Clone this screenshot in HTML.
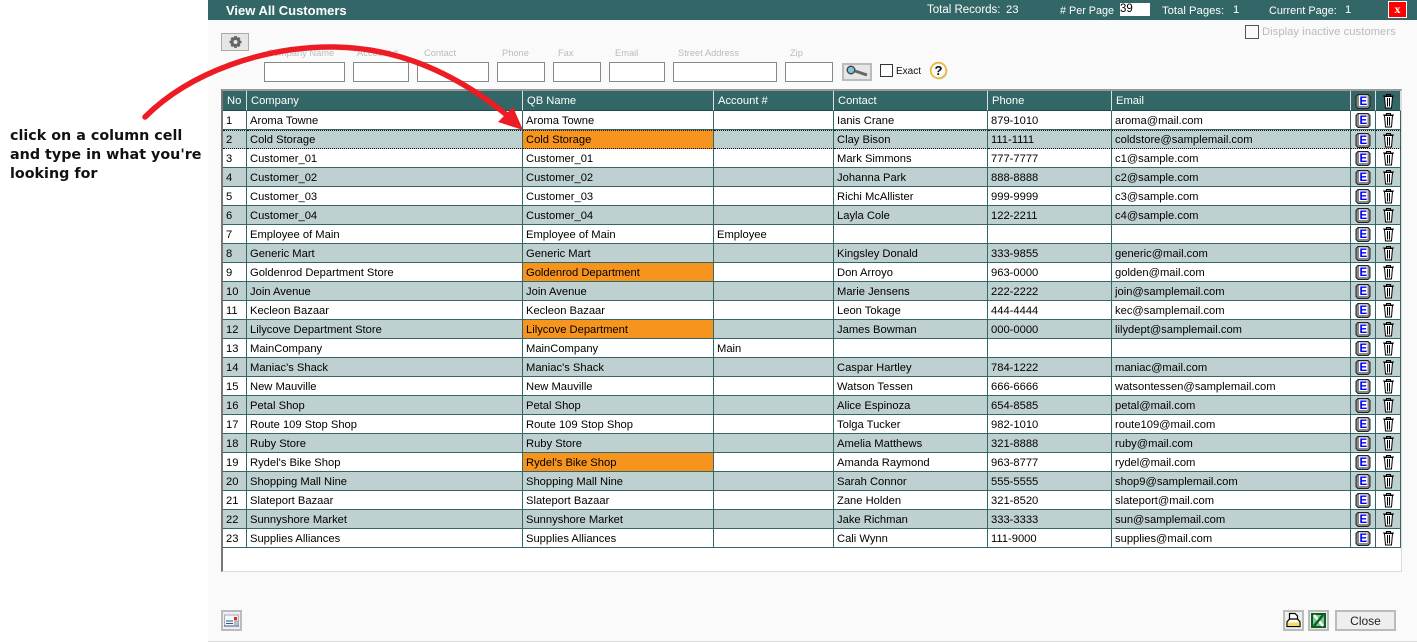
<!DOCTYPE html>
<html><head><meta charset="utf-8"><style>
html,body{margin:0;padding:0;width:1417px;height:643px;overflow:hidden;background:#fff;font-family:"Liberation Sans",sans-serif}
.a{position:absolute;white-space:nowrap}
.l{position:absolute;top:47px;font-size:9.3px;line-height:12px;color:#bbb;white-space:nowrap}
.i{position:absolute;top:62px;height:18px;border:1px solid #888;background:#fff;box-sizing:content-box}
.h{position:absolute;top:3px;font-size:11.3px;line-height:14px;color:#fff;white-space:nowrap}
.b{position:absolute;box-sizing:border-box;border:2px solid #bbb;background:#eee}
table{position:absolute;left:223px;top:91px;border-collapse:separate;border-spacing:0;table-layout:fixed;width:1178px}
td,th{box-sizing:border-box;height:19px;padding:2px 0 0 3px;font-size:11.2px;font-weight:normal;line-height:16px;text-align:left;white-space:nowrap;overflow:hidden;border-right:1px solid #336666;border-bottom:1px solid #336666;color:#000;vertical-align:middle}
th{background:#336666;color:#fff;height:20px;padding-left:4px;line-height:17px;border-right:1px solid #ddd;border-bottom:1px solid #1f4a4a}
tr.e td{background:#bfd0d0}
td.o{background:#f7941d!important}
td.c,th.c{padding:0;text-align:center}
td svg,th svg{display:block;margin:0 auto}
tr.s td{border-top:1px dotted #111;border-bottom:1px dotted #111;line-height:16px;padding-top:0}
</style></head><body>
<div class="a" style="left:208px;top:0;width:1209px;height:641px;background:#fafafa;border-bottom:1px solid #ddd"></div>
<div class="a" style="left:208px;top:0;width:1209px;height:20px;background:#336666"></div>
<div class="a" style="left:226px;top:3px;font-size:13px;font-weight:bold;line-height:15px;color:#fff">View All Customers</div>
<div class="h" style="left:927px;font-size:11.5px">Total Records:</div><div class="h" style="left:1006px">23</div>
<div class="h" style="left:1060px;top:4px;font-size:10.800px"># Per Page</div>
<div class="a" style="left:1120px;top:3px;width:30px;height:13px;background:#fff;font-size:11.500px;line-height:13px;color:#000">39</div>
<div class="h" style="left:1162px;top:4px">Total Pages:</div><div class="h" style="left:1233px">1</div>
<div class="h" style="left:1269px;top:4px;font-size:10.900px">Current Page:</div><div class="h" style="left:1345px">1</div>
<div class="a" style="left:1388px;top:1px;width:19px;height:17px;box-sizing:border-box;background:#f00;border:1px solid #fff;color:#fff;font:bold 12px/14px 'Liberation Serif',serif;text-align:center">x</div>

<div class="b" style="left:221px;top:33px;width:28px;height:18px;background:#e6e6e6;border-width:1px;border-color:#aaa"><svg width="26" height="16" viewBox="0 0 26 16" style="display:block"><circle cx="13.500" cy="8" r="3.500" fill="none" stroke="#666" stroke-width="3"/><path d="M13.500 2v2.500M13.500 11.500V14M7.500 8H10M17 8h2.500M9.300 3.800l1.700 1.700M16 10.500l1.700 1.700M17.700 3.800L16 5.500M11 10.500l-1.700 1.700" stroke="#666" stroke-width="2.600"/></svg></div>
<div class="a" style="left:1245px;top:25px;width:12px;height:12px;border:1px solid #555;background:#fafafa"></div>
<div class="a" style="left:1262px;top:25px;font-size:11.300px;line-height:14px;color:#bbb">Display inactive customers</div>

<div class="l" style="left:267px">Company Name</div><div class="l" style="left:357px">Account #</div><div class="l" style="left:424px">Contact</div><div class="l" style="left:502px">Phone</div><div class="l" style="left:558px">Fax</div><div class="l" style="left:615px">Email</div><div class="l" style="left:678px">Street Address</div><div class="l" style="left:790px">Zip</div>
<div class="i" style="left:264px;width:79px"></div><div class="i" style="left:353px;width:54px"></div><div class="i" style="left:417px;width:70px"></div><div class="i" style="left:497px;width:46px"></div><div class="i" style="left:553px;width:46px"></div><div class="i" style="left:609px;width:54px"></div><div class="i" style="left:673px;width:102px"></div><div class="i" style="left:785px;width:46px"></div>

<div class="b" style="left:842px;top:63px;width:30px;height:18px;background:#e6e6e6"><svg width="26" height="14" viewBox="0 0 26 14" style="display:block"><circle cx="7" cy="5" r="3.800" fill="#7fc4d6" stroke="#444" stroke-width="1.400"/><path d="M11 6l12 4" stroke="#666" stroke-width="3"/></svg></div>
<div class="a" style="left:880px;top:64px;width:11px;height:11px;border:1px solid #333;background:#fff"></div>
<div class="a" style="left:896px;top:66px;font-size:10px;line-height:12px;color:#111">Exact</div>
<svg class="a" style="left:929px;top:61px" width="20" height="20" viewBox="0 0 20 20"><circle cx="10.500" cy="10.500" r="8" fill="#ddd8d0"/><circle cx="9.500" cy="9.500" r="7.800" fill="#fafafa" stroke="#e6bc3c" stroke-width="1.800"/><text x="9.500" y="14" font-family="Liberation Sans" font-size="13" font-weight="bold" text-anchor="middle" fill="#111">?</text></svg>

<div class="a" style="left:221px;top:89px;width:1181px;height:483px;box-sizing:border-box;background:#fff;border-top:2px solid #999;border-left:2px solid #777;border-right:1px solid #ddd;border-bottom:1px solid #ddd"></div>

<table>
<colgroup><col style="width:24px"><col style="width:276px"><col style="width:191px"><col style="width:120px"><col style="width:154px"><col style="width:124px"><col style="width:239px"><col style="width:25px"><col style="width:25px"></colgroup>
<tr><th>No</th><th>Company</th><th>QB Name</th><th>Account #</th><th>Contact</th><th>Phone</th><th>Email</th>
<th class="c"><svg width="16" height="16" viewBox="0 0 16 16"><path d="M3 1.500h10l2 2v10l-2 2H3l-2-2v-10z" fill="#888" stroke="#222"/><rect x="4" y="2.500" width="8.500" height="10.500" fill="#fff"/><text x="8.300" y="12" font-family="Liberation Sans" font-size="11.500" font-weight="bold" text-anchor="middle" fill="#00f">E</text></svg></th>
<th class="c"><svg width="14" height="16" viewBox="0 0 14 16"><path d="M3.500 3.500l1 11.500h6l1-11.500z" fill="#fff" stroke="#000"/><path d="M2 3h11M5.500 2.500V1.500h4v1M6.500 5v8.500M8.500 5v8.500" fill="none" stroke="#000"/></svg></th></tr>
<tr><td>1</td><td>Aroma Towne</td><td>Aroma Towne</td><td></td><td>Ianis Crane</td><td>879-1010</td><td>aroma@mail.com</td><td class="c"><svg width="16" height="16" viewBox="0 0 16 16"><path d="M3 1.500h10l2 2v10l-2 2H3l-2-2v-10z" fill="#888" stroke="#222"/><rect x="4" y="2.500" width="8.500" height="10.500" fill="#fff"/><text x="8.300" y="12" font-family="Liberation Sans" font-size="11.500" font-weight="bold" text-anchor="middle" fill="#00f">E</text></svg></td><td class="c"><svg width="14" height="16" viewBox="0 0 14 16"><path d="M3.500 3.500l1 11.500h6l1-11.500z" fill="#fff" stroke="#000"/><path d="M2 3h11M5.500 2.500V1.500h4v1M6.500 5v8.500M8.500 5v8.500" fill="none" stroke="#000"/></svg></td></tr>
<tr class="e s"><td>2</td><td>Cold Storage</td><td class="o">Cold Storage</td><td></td><td>Clay Bison</td><td>111-1111</td><td>coldstore@samplemail.com</td><td class="c"><svg width="16" height="16" viewBox="0 0 16 16"><path d="M3 1.500h10l2 2v10l-2 2H3l-2-2v-10z" fill="#888" stroke="#222"/><rect x="4" y="2.500" width="8.500" height="10.500" fill="#fff"/><text x="8.300" y="12" font-family="Liberation Sans" font-size="11.500" font-weight="bold" text-anchor="middle" fill="#00f">E</text></svg></td><td class="c"><svg width="14" height="16" viewBox="0 0 14 16"><path d="M3.500 3.500l1 11.500h6l1-11.500z" fill="#fff" stroke="#000"/><path d="M2 3h11M5.500 2.500V1.500h4v1M6.500 5v8.500M8.500 5v8.500" fill="none" stroke="#000"/></svg></td></tr>
<tr><td>3</td><td>Customer_01</td><td>Customer_01</td><td></td><td>Mark Simmons</td><td>777-7777</td><td>c1@sample.com</td><td class="c"><svg width="16" height="16" viewBox="0 0 16 16"><path d="M3 1.500h10l2 2v10l-2 2H3l-2-2v-10z" fill="#888" stroke="#222"/><rect x="4" y="2.500" width="8.500" height="10.500" fill="#fff"/><text x="8.300" y="12" font-family="Liberation Sans" font-size="11.500" font-weight="bold" text-anchor="middle" fill="#00f">E</text></svg></td><td class="c"><svg width="14" height="16" viewBox="0 0 14 16"><path d="M3.500 3.500l1 11.500h6l1-11.500z" fill="#fff" stroke="#000"/><path d="M2 3h11M5.500 2.500V1.500h4v1M6.500 5v8.500M8.500 5v8.500" fill="none" stroke="#000"/></svg></td></tr>
<tr class="e"><td>4</td><td>Customer_02</td><td>Customer_02</td><td></td><td>Johanna Park</td><td>888-8888</td><td>c2@sample.com</td><td class="c"><svg width="16" height="16" viewBox="0 0 16 16"><path d="M3 1.500h10l2 2v10l-2 2H3l-2-2v-10z" fill="#888" stroke="#222"/><rect x="4" y="2.500" width="8.500" height="10.500" fill="#fff"/><text x="8.300" y="12" font-family="Liberation Sans" font-size="11.500" font-weight="bold" text-anchor="middle" fill="#00f">E</text></svg></td><td class="c"><svg width="14" height="16" viewBox="0 0 14 16"><path d="M3.500 3.500l1 11.500h6l1-11.500z" fill="#fff" stroke="#000"/><path d="M2 3h11M5.500 2.500V1.500h4v1M6.500 5v8.500M8.500 5v8.500" fill="none" stroke="#000"/></svg></td></tr>
<tr><td>5</td><td>Customer_03</td><td>Customer_03</td><td></td><td>Richi McAllister</td><td>999-9999</td><td>c3@sample.com</td><td class="c"><svg width="16" height="16" viewBox="0 0 16 16"><path d="M3 1.500h10l2 2v10l-2 2H3l-2-2v-10z" fill="#888" stroke="#222"/><rect x="4" y="2.500" width="8.500" height="10.500" fill="#fff"/><text x="8.300" y="12" font-family="Liberation Sans" font-size="11.500" font-weight="bold" text-anchor="middle" fill="#00f">E</text></svg></td><td class="c"><svg width="14" height="16" viewBox="0 0 14 16"><path d="M3.500 3.500l1 11.500h6l1-11.500z" fill="#fff" stroke="#000"/><path d="M2 3h11M5.500 2.500V1.500h4v1M6.500 5v8.500M8.500 5v8.500" fill="none" stroke="#000"/></svg></td></tr>
<tr class="e"><td>6</td><td>Customer_04</td><td>Customer_04</td><td></td><td>Layla Cole</td><td>122-2211</td><td>c4@sample.com</td><td class="c"><svg width="16" height="16" viewBox="0 0 16 16"><path d="M3 1.500h10l2 2v10l-2 2H3l-2-2v-10z" fill="#888" stroke="#222"/><rect x="4" y="2.500" width="8.500" height="10.500" fill="#fff"/><text x="8.300" y="12" font-family="Liberation Sans" font-size="11.500" font-weight="bold" text-anchor="middle" fill="#00f">E</text></svg></td><td class="c"><svg width="14" height="16" viewBox="0 0 14 16"><path d="M3.500 3.500l1 11.500h6l1-11.500z" fill="#fff" stroke="#000"/><path d="M2 3h11M5.500 2.500V1.500h4v1M6.500 5v8.500M8.500 5v8.500" fill="none" stroke="#000"/></svg></td></tr>
<tr><td>7</td><td>Employee of Main</td><td>Employee of Main</td><td>Employee</td><td></td><td></td><td></td><td class="c"><svg width="16" height="16" viewBox="0 0 16 16"><path d="M3 1.500h10l2 2v10l-2 2H3l-2-2v-10z" fill="#888" stroke="#222"/><rect x="4" y="2.500" width="8.500" height="10.500" fill="#fff"/><text x="8.300" y="12" font-family="Liberation Sans" font-size="11.500" font-weight="bold" text-anchor="middle" fill="#00f">E</text></svg></td><td class="c"><svg width="14" height="16" viewBox="0 0 14 16"><path d="M3.500 3.500l1 11.500h6l1-11.500z" fill="#fff" stroke="#000"/><path d="M2 3h11M5.500 2.500V1.500h4v1M6.500 5v8.500M8.500 5v8.500" fill="none" stroke="#000"/></svg></td></tr>
<tr class="e"><td>8</td><td>Generic Mart</td><td>Generic Mart</td><td></td><td>Kingsley Donald</td><td>333-9855</td><td>generic@mail.com</td><td class="c"><svg width="16" height="16" viewBox="0 0 16 16"><path d="M3 1.500h10l2 2v10l-2 2H3l-2-2v-10z" fill="#888" stroke="#222"/><rect x="4" y="2.500" width="8.500" height="10.500" fill="#fff"/><text x="8.300" y="12" font-family="Liberation Sans" font-size="11.500" font-weight="bold" text-anchor="middle" fill="#00f">E</text></svg></td><td class="c"><svg width="14" height="16" viewBox="0 0 14 16"><path d="M3.500 3.500l1 11.500h6l1-11.500z" fill="#fff" stroke="#000"/><path d="M2 3h11M5.500 2.500V1.500h4v1M6.500 5v8.500M8.500 5v8.500" fill="none" stroke="#000"/></svg></td></tr>
<tr><td>9</td><td>Goldenrod Department Store</td><td class="o">Goldenrod Department</td><td></td><td>Don Arroyo</td><td>963-0000</td><td>golden@mail.com</td><td class="c"><svg width="16" height="16" viewBox="0 0 16 16"><path d="M3 1.500h10l2 2v10l-2 2H3l-2-2v-10z" fill="#888" stroke="#222"/><rect x="4" y="2.500" width="8.500" height="10.500" fill="#fff"/><text x="8.300" y="12" font-family="Liberation Sans" font-size="11.500" font-weight="bold" text-anchor="middle" fill="#00f">E</text></svg></td><td class="c"><svg width="14" height="16" viewBox="0 0 14 16"><path d="M3.500 3.500l1 11.500h6l1-11.500z" fill="#fff" stroke="#000"/><path d="M2 3h11M5.500 2.500V1.500h4v1M6.500 5v8.500M8.500 5v8.500" fill="none" stroke="#000"/></svg></td></tr>
<tr class="e"><td>10</td><td>Join Avenue</td><td>Join Avenue</td><td></td><td>Marie Jensens</td><td>222-2222</td><td>join@samplemail.com</td><td class="c"><svg width="16" height="16" viewBox="0 0 16 16"><path d="M3 1.500h10l2 2v10l-2 2H3l-2-2v-10z" fill="#888" stroke="#222"/><rect x="4" y="2.500" width="8.500" height="10.500" fill="#fff"/><text x="8.300" y="12" font-family="Liberation Sans" font-size="11.500" font-weight="bold" text-anchor="middle" fill="#00f">E</text></svg></td><td class="c"><svg width="14" height="16" viewBox="0 0 14 16"><path d="M3.500 3.500l1 11.500h6l1-11.500z" fill="#fff" stroke="#000"/><path d="M2 3h11M5.500 2.500V1.500h4v1M6.500 5v8.500M8.500 5v8.500" fill="none" stroke="#000"/></svg></td></tr>
<tr><td>11</td><td>Kecleon Bazaar</td><td>Kecleon Bazaar</td><td></td><td>Leon Tokage</td><td>444-4444</td><td>kec@samplemail.com</td><td class="c"><svg width="16" height="16" viewBox="0 0 16 16"><path d="M3 1.500h10l2 2v10l-2 2H3l-2-2v-10z" fill="#888" stroke="#222"/><rect x="4" y="2.500" width="8.500" height="10.500" fill="#fff"/><text x="8.300" y="12" font-family="Liberation Sans" font-size="11.500" font-weight="bold" text-anchor="middle" fill="#00f">E</text></svg></td><td class="c"><svg width="14" height="16" viewBox="0 0 14 16"><path d="M3.500 3.500l1 11.500h6l1-11.500z" fill="#fff" stroke="#000"/><path d="M2 3h11M5.500 2.500V1.500h4v1M6.500 5v8.500M8.500 5v8.500" fill="none" stroke="#000"/></svg></td></tr>
<tr class="e"><td>12</td><td>Lilycove Department Store</td><td class="o">Lilycove Department</td><td></td><td>James Bowman</td><td>000-0000</td><td>lilydept@samplemail.com</td><td class="c"><svg width="16" height="16" viewBox="0 0 16 16"><path d="M3 1.500h10l2 2v10l-2 2H3l-2-2v-10z" fill="#888" stroke="#222"/><rect x="4" y="2.500" width="8.500" height="10.500" fill="#fff"/><text x="8.300" y="12" font-family="Liberation Sans" font-size="11.500" font-weight="bold" text-anchor="middle" fill="#00f">E</text></svg></td><td class="c"><svg width="14" height="16" viewBox="0 0 14 16"><path d="M3.500 3.500l1 11.500h6l1-11.500z" fill="#fff" stroke="#000"/><path d="M2 3h11M5.500 2.500V1.500h4v1M6.500 5v8.500M8.500 5v8.500" fill="none" stroke="#000"/></svg></td></tr>
<tr><td>13</td><td>MainCompany</td><td>MainCompany</td><td>Main</td><td></td><td></td><td></td><td class="c"><svg width="16" height="16" viewBox="0 0 16 16"><path d="M3 1.500h10l2 2v10l-2 2H3l-2-2v-10z" fill="#888" stroke="#222"/><rect x="4" y="2.500" width="8.500" height="10.500" fill="#fff"/><text x="8.300" y="12" font-family="Liberation Sans" font-size="11.500" font-weight="bold" text-anchor="middle" fill="#00f">E</text></svg></td><td class="c"><svg width="14" height="16" viewBox="0 0 14 16"><path d="M3.500 3.500l1 11.500h6l1-11.500z" fill="#fff" stroke="#000"/><path d="M2 3h11M5.500 2.500V1.500h4v1M6.500 5v8.500M8.500 5v8.500" fill="none" stroke="#000"/></svg></td></tr>
<tr class="e"><td>14</td><td>Maniac's Shack</td><td>Maniac's Shack</td><td></td><td>Caspar Hartley</td><td>784-1222</td><td>maniac@mail.com</td><td class="c"><svg width="16" height="16" viewBox="0 0 16 16"><path d="M3 1.500h10l2 2v10l-2 2H3l-2-2v-10z" fill="#888" stroke="#222"/><rect x="4" y="2.500" width="8.500" height="10.500" fill="#fff"/><text x="8.300" y="12" font-family="Liberation Sans" font-size="11.500" font-weight="bold" text-anchor="middle" fill="#00f">E</text></svg></td><td class="c"><svg width="14" height="16" viewBox="0 0 14 16"><path d="M3.500 3.500l1 11.500h6l1-11.500z" fill="#fff" stroke="#000"/><path d="M2 3h11M5.500 2.500V1.500h4v1M6.500 5v8.500M8.500 5v8.500" fill="none" stroke="#000"/></svg></td></tr>
<tr><td>15</td><td>New Mauville</td><td>New Mauville</td><td></td><td>Watson Tessen</td><td>666-6666</td><td>watsontessen@samplemail.com</td><td class="c"><svg width="16" height="16" viewBox="0 0 16 16"><path d="M3 1.500h10l2 2v10l-2 2H3l-2-2v-10z" fill="#888" stroke="#222"/><rect x="4" y="2.500" width="8.500" height="10.500" fill="#fff"/><text x="8.300" y="12" font-family="Liberation Sans" font-size="11.500" font-weight="bold" text-anchor="middle" fill="#00f">E</text></svg></td><td class="c"><svg width="14" height="16" viewBox="0 0 14 16"><path d="M3.500 3.500l1 11.500h6l1-11.500z" fill="#fff" stroke="#000"/><path d="M2 3h11M5.500 2.500V1.500h4v1M6.500 5v8.500M8.500 5v8.500" fill="none" stroke="#000"/></svg></td></tr>
<tr class="e"><td>16</td><td>Petal Shop</td><td>Petal Shop</td><td></td><td>Alice Espinoza</td><td>654-8585</td><td>petal@mail.com</td><td class="c"><svg width="16" height="16" viewBox="0 0 16 16"><path d="M3 1.500h10l2 2v10l-2 2H3l-2-2v-10z" fill="#888" stroke="#222"/><rect x="4" y="2.500" width="8.500" height="10.500" fill="#fff"/><text x="8.300" y="12" font-family="Liberation Sans" font-size="11.500" font-weight="bold" text-anchor="middle" fill="#00f">E</text></svg></td><td class="c"><svg width="14" height="16" viewBox="0 0 14 16"><path d="M3.500 3.500l1 11.500h6l1-11.500z" fill="#fff" stroke="#000"/><path d="M2 3h11M5.500 2.500V1.500h4v1M6.500 5v8.500M8.500 5v8.500" fill="none" stroke="#000"/></svg></td></tr>
<tr><td>17</td><td>Route 109 Stop Shop</td><td>Route 109 Stop Shop</td><td></td><td>Tolga Tucker</td><td>982-1010</td><td>route109@mail.com</td><td class="c"><svg width="16" height="16" viewBox="0 0 16 16"><path d="M3 1.500h10l2 2v10l-2 2H3l-2-2v-10z" fill="#888" stroke="#222"/><rect x="4" y="2.500" width="8.500" height="10.500" fill="#fff"/><text x="8.300" y="12" font-family="Liberation Sans" font-size="11.500" font-weight="bold" text-anchor="middle" fill="#00f">E</text></svg></td><td class="c"><svg width="14" height="16" viewBox="0 0 14 16"><path d="M3.500 3.500l1 11.500h6l1-11.500z" fill="#fff" stroke="#000"/><path d="M2 3h11M5.500 2.500V1.500h4v1M6.500 5v8.500M8.500 5v8.500" fill="none" stroke="#000"/></svg></td></tr>
<tr class="e"><td>18</td><td>Ruby Store</td><td>Ruby Store</td><td></td><td>Amelia Matthews</td><td>321-8888</td><td>ruby@mail.com</td><td class="c"><svg width="16" height="16" viewBox="0 0 16 16"><path d="M3 1.500h10l2 2v10l-2 2H3l-2-2v-10z" fill="#888" stroke="#222"/><rect x="4" y="2.500" width="8.500" height="10.500" fill="#fff"/><text x="8.300" y="12" font-family="Liberation Sans" font-size="11.500" font-weight="bold" text-anchor="middle" fill="#00f">E</text></svg></td><td class="c"><svg width="14" height="16" viewBox="0 0 14 16"><path d="M3.500 3.500l1 11.500h6l1-11.500z" fill="#fff" stroke="#000"/><path d="M2 3h11M5.500 2.500V1.500h4v1M6.500 5v8.500M8.500 5v8.500" fill="none" stroke="#000"/></svg></td></tr>
<tr><td>19</td><td>Rydel's Bike Shop</td><td class="o">Rydel's Bike Shop</td><td></td><td>Amanda Raymond</td><td>963-8777</td><td>rydel@mail.com</td><td class="c"><svg width="16" height="16" viewBox="0 0 16 16"><path d="M3 1.500h10l2 2v10l-2 2H3l-2-2v-10z" fill="#888" stroke="#222"/><rect x="4" y="2.500" width="8.500" height="10.500" fill="#fff"/><text x="8.300" y="12" font-family="Liberation Sans" font-size="11.500" font-weight="bold" text-anchor="middle" fill="#00f">E</text></svg></td><td class="c"><svg width="14" height="16" viewBox="0 0 14 16"><path d="M3.500 3.500l1 11.500h6l1-11.500z" fill="#fff" stroke="#000"/><path d="M2 3h11M5.500 2.500V1.500h4v1M6.500 5v8.500M8.500 5v8.500" fill="none" stroke="#000"/></svg></td></tr>
<tr class="e"><td>20</td><td>Shopping Mall Nine</td><td>Shopping Mall Nine</td><td></td><td>Sarah Connor</td><td>555-5555</td><td>shop9@samplemail.com</td><td class="c"><svg width="16" height="16" viewBox="0 0 16 16"><path d="M3 1.500h10l2 2v10l-2 2H3l-2-2v-10z" fill="#888" stroke="#222"/><rect x="4" y="2.500" width="8.500" height="10.500" fill="#fff"/><text x="8.300" y="12" font-family="Liberation Sans" font-size="11.500" font-weight="bold" text-anchor="middle" fill="#00f">E</text></svg></td><td class="c"><svg width="14" height="16" viewBox="0 0 14 16"><path d="M3.500 3.500l1 11.500h6l1-11.500z" fill="#fff" stroke="#000"/><path d="M2 3h11M5.500 2.500V1.500h4v1M6.500 5v8.500M8.500 5v8.500" fill="none" stroke="#000"/></svg></td></tr>
<tr><td>21</td><td>Slateport Bazaar</td><td>Slateport Bazaar</td><td></td><td>Zane Holden</td><td>321-8520</td><td>slateport@mail.com</td><td class="c"><svg width="16" height="16" viewBox="0 0 16 16"><path d="M3 1.500h10l2 2v10l-2 2H3l-2-2v-10z" fill="#888" stroke="#222"/><rect x="4" y="2.500" width="8.500" height="10.500" fill="#fff"/><text x="8.300" y="12" font-family="Liberation Sans" font-size="11.500" font-weight="bold" text-anchor="middle" fill="#00f">E</text></svg></td><td class="c"><svg width="14" height="16" viewBox="0 0 14 16"><path d="M3.500 3.500l1 11.500h6l1-11.500z" fill="#fff" stroke="#000"/><path d="M2 3h11M5.500 2.500V1.500h4v1M6.500 5v8.500M8.500 5v8.500" fill="none" stroke="#000"/></svg></td></tr>
<tr class="e"><td>22</td><td>Sunnyshore Market</td><td>Sunnyshore Market</td><td></td><td>Jake Richman</td><td>333-3333</td><td>sun@samplemail.com</td><td class="c"><svg width="16" height="16" viewBox="0 0 16 16"><path d="M3 1.500h10l2 2v10l-2 2H3l-2-2v-10z" fill="#888" stroke="#222"/><rect x="4" y="2.500" width="8.500" height="10.500" fill="#fff"/><text x="8.300" y="12" font-family="Liberation Sans" font-size="11.500" font-weight="bold" text-anchor="middle" fill="#00f">E</text></svg></td><td class="c"><svg width="14" height="16" viewBox="0 0 14 16"><path d="M3.500 3.500l1 11.500h6l1-11.500z" fill="#fff" stroke="#000"/><path d="M2 3h11M5.500 2.500V1.500h4v1M6.500 5v8.500M8.500 5v8.500" fill="none" stroke="#000"/></svg></td></tr>
<tr><td>23</td><td>Supplies Alliances</td><td>Supplies Alliances</td><td></td><td>Cali Wynn</td><td>111-9000</td><td>supplies@mail.com</td><td class="c"><svg width="16" height="16" viewBox="0 0 16 16"><path d="M3 1.500h10l2 2v10l-2 2H3l-2-2v-10z" fill="#888" stroke="#222"/><rect x="4" y="2.500" width="8.500" height="10.500" fill="#fff"/><text x="8.300" y="12" font-family="Liberation Sans" font-size="11.500" font-weight="bold" text-anchor="middle" fill="#00f">E</text></svg></td><td class="c"><svg width="14" height="16" viewBox="0 0 14 16"><path d="M3.500 3.500l1 11.500h6l1-11.500z" fill="#fff" stroke="#000"/><path d="M2 3h11M5.500 2.500V1.500h4v1M6.500 5v8.500M8.500 5v8.500" fill="none" stroke="#000"/></svg></td></tr>
</table>

<div class="b" style="left:221px;top:610px;width:21px;height:21px"><svg width="17" height="17" viewBox="0 0 17 17" style="display:block"><rect x="1.500" y="3" width="14" height="11" fill="#f4f6fa" stroke="#aab"/><path d="M3 9h7M3 11.500h7M1 14h15" stroke="#335588"/><rect x="11" y="5" width="3" height="3" fill="#e22"/><rect x="11" y="8" width="4" height="5" fill="#bbb"/></svg></div>
<div class="b" style="left:1283px;top:610px;width:21px;height:21px"><svg width="17" height="17" viewBox="0 0 17 17" style="display:block"><path d="M4.500 9V1.500h5.500l2.500 2.500V9" fill="#fff" stroke="#000" stroke-width="1.200"/><path d="M4.500 7L2 10v4.500h13V10l-2.500-3z" fill="#fff" stroke="#000" stroke-width="1.200"/><rect x="2.500" y="10.500" width="12" height="3.500" fill="#f7dc5a"/></svg></div>
<div class="b" style="left:1308px;top:610px;width:21px;height:21px"><svg width="17" height="17" viewBox="0 0 17 17" style="display:block"><rect x="1" y="1" width="15" height="15" fill="#0b5e20"/><rect x="3" y="3" width="11" height="11" fill="#7fc89a"/><path d="M4 3l9 11" stroke="#fff" stroke-width="2.500"/><path d="M13 3L4 14" stroke="#0b5e20" stroke-width="2.500"/></svg></div>
<div class="b" style="left:1335px;top:610px;width:61px;height:21px;font-size:12px;line-height:18px;text-align:center;color:#222">Close</div>

<svg class="a" style="left:0;top:0;pointer-events:none" width="1417" height="643" viewBox="0 0 1417 643"><path d="M145 117C190 72 265 46 335 47C400 48 458 75 508 116" fill="none" stroke="#ed1c24" stroke-width="5.500" stroke-linecap="round"/><path d="M523 130L498 122L513 107Z" fill="#ed1c24"/></svg>

<div class="a" style="left:10px;top:127px;font:bold 14.300px/19px 'DejaVu Sans',sans-serif;color:#111">click on a column cell<br>and type in what you're<br>looking for</div>
</body></html>
